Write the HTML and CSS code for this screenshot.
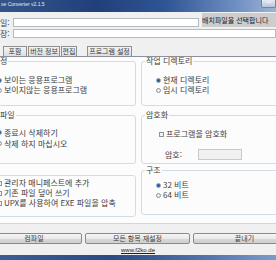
FILE: index.html
```html
<!DOCTYPE html>
<html lang="ko">
<head>
  <meta charset="UTF-8" />
  <title>Bat To Exe Converter v2.1.5</title>
  <meta name="viewport" content="width=device-width, initial-scale=1" />
  <link rel="stylesheet" href="styles.css">
</head>
<body>

  <div class="titlebar">
    <span class="title">xe Converter v2.1.5</span>
    <span class="win-btn">&minus;</span>
  </div>

  <div class="row row-file">
    <span class="label">일:</span>
    <div class="field"></div>
    <div class="pick">배치파일을 선택합니다</div>
  </div>
  <div class="row row-save">
    <span class="label">장:</span>
    <div class="field"></div>
  </div>

  <div class="tabs">
    <span class="tab tab-include">포함</span>
    <span class="tab tab-version">버전 정보</span>
    <span class="tab tab-edit">편집</span>
    <span class="tab tab-settings">프로그램 설정</span>
  </div>

  <div class="panel">
    <div class="columns">

      <div class="col col-left">
        <fieldset class="group g-window">
          <legend>정</legend>
          <div class="opts">
            <div class="opt"><span class="radio on"></span>보이는 응용프로그램</div>
            <div class="opt"><span class="radio"></span>보이지않는 응용프로그램</div>
          </div>
        </fieldset>

        <fieldset class="group g-temp">
          <legend>파일</legend>
          <div class="opts">
            <div class="opt"><span class="radio on"></span>종료시 삭제하기</div>
            <div class="opt"><span class="radio"></span>삭제 하지 마십시오</div>
          </div>
        </fieldset>

        <fieldset class="group g-misc">
          <div class="opts">
            <div class="opt"><span class="check"></span>관리자 매니페스트에 추가</div>
            <div class="opt"><span class="check"></span>기존 파일 덮어 쓰기</div>
            <div class="opt"><span class="check"></span>UPX를 사용하여 EXE 파일을 압축</div>
          </div>
        </fieldset>
      </div>

      <div class="col col-right">
        <fieldset class="group g-dir">
          <legend>작업 디렉토리</legend>
          <div class="opts">
            <div class="opt"><span class="radio on"></span>현재 디렉토리</div>
            <div class="opt"><span class="radio"></span>임시 디렉토리</div>
          </div>
        </fieldset>

        <fieldset class="group g-crypt">
          <legend>암호화</legend>
          <div class="opts">
            <div class="opt"><span class="check"></span>프로그램을 암호화</div>
            <div class="opt pass-row"><span class="pass-label">암호:</span><div class="pass-field"></div></div>
          </div>
        </fieldset>

        <fieldset class="group g-arch">
          <legend>구조</legend>
          <div class="opts">
            <div class="opt"><span class="radio on"></span>32 비트</div>
            <div class="opt"><span class="radio"></span>64 비트</div>
          </div>
        </fieldset>
      </div>

    </div>
  </div>

  <div class="buttons">
    <div class="btn">컴파일</div>
    <div class="btn">모든 항목 재설정</div>
    <div class="btn">끝내기</div>
  </div>

  <div class="footer"><a href="#">www.f2ko.de</a></div>
  <div class="frame-bottom"></div>

</body>
</html>
```

FILE: styles.css
```css
body {
  margin: 0;
  width: 276px;
  height: 260px;
  overflow: hidden;
  background: #f0f0f0;
  font-family: "Noto Sans CJK KR", sans-serif;
  font-size: 8px;
  line-height: 10px;
  color: #404040;
}

/* barra de titulo */
.titlebar {
  height: 12px;
  display: flex;
  justify-content: space-between;
  align-items: flex-start;
  background: linear-gradient(90deg, #34558c 0%, #21407a 35%, #2f5593 60%, #6d8ec2 85%, #9db4d6 100%);
}
.title {
  font-family: "Liberation Sans", sans-serif;
  font-size: 5px;
  line-height: 9px;
  color: #e4ebf6;
  padding-left: 1px;
}
.win-btn {
  width: 15px;
  height: 8px;
  box-sizing: border-box;
  border: 1px solid #6f85a6;
  border-top: 0;
  border-radius: 0 0 2px 2px;
  background: linear-gradient(#e6edf6, #b3c5dc);
  font-family: "Liberation Sans", sans-serif;
  font-size: 7px;
  line-height: 6px;
  text-align: center;
  color: #fff;
}

/* campos de archivo */
.row {
  display: flex;
  align-items: flex-end;
}
.row-file {
  margin-top: 1px;
  height: 14px;
}
.row-save {
  margin-top: 2px;
  height: 9px;
}
.label {
  width: 13px;
  line-height: 9px;
}
.field {
  flex: 1;
  height: 9px;
  box-sizing: border-box;
  border: 1px solid #b5b9c2;
  background: #fff;
}
.pick {
  width: 74px;
  height: 14px;
  margin-left: 3px;
  background: #cdcdcd;
  font-size: 7px;
  line-height: 14px;
  white-space: nowrap;
  color: #222;
}

/* pestanas */
.tabs {
  margin-top: 8px;
  height: 10px;
  display: flex;
  gap: 1px;
  padding-left: 3px;
}
.tab {
  box-sizing: border-box;
  border: 1px solid #8f8f8f;
  border-bottom: 0;
  background: linear-gradient(#f4f4f4, #dedede);
  font-size: 7px;
  line-height: 9px;
  text-align: center;
  white-space: nowrap;
}
.tab-include { width: 24px; }
.tab-version { width: 32px; }
.tab-edit { width: 16px; }
.tab-settings { width: 45px; margin-left: 9px; }

/* panel */
.panel {
  height: 168px;
  box-sizing: border-box;
  border-top: 1px solid #8d9099;
  border-bottom: 1px solid #d4d4d4;
  background: #fcfcfc;
  overflow: hidden;
}
.columns {
  display: grid;
  grid-template-columns: 161px 161px;
  column-gap: 5px;
  margin-left: -25px;
  align-items: start;
}
.group {
  margin: 0;
  padding: 0;
  min-width: 0;
  border: 1px solid #d3dce3;
  border-radius: 3px;
}
.group legend {
  margin-left: 3px;
  padding: 0 1px;
  line-height: 8px;
}
.col-left .group legend {
  margin-left: 24px;
  padding: 0 1px 0 0;
}
.opt {
  display: flex;
  align-items: center;
  gap: 2px;
  height: 10px;
  white-space: nowrap;
}
.col-left .opts { padding-left: 21px; }
.col-right .opts { padding-left: 14px; }

.radio {
  width: 5px;
  height: 5px;
  box-sizing: border-box;
  border: 1px solid #8c939c;
  border-radius: 50%;
  background: #eceef0;
}
.radio.on {
  background: radial-gradient(circle, #1e5fb0 0 1.4px, #e8ecf0 1.6px);
}
.check {
  width: 5px;
  height: 5px;
  box-sizing: border-box;
  border: 1px solid #8c939c;
  background: #f2f2f2;
}

.g-window .opts { padding-top: 10px; padding-bottom: 10px; }
.g-temp { margin-top: 5px; }
.g-temp .opts { padding-top: 8px; padding-bottom: 14px; }
.g-temp .opt { height: 11px; }
.g-misc { margin-top: 11px; }
.g-misc .opts { padding-top: 2px; padding-bottom: 8px; }

.g-dir .opts { padding-top: 10px; padding-bottom: 10px; }
.g-crypt { margin-top: 5px; }
.g-crypt .opts { padding-top: 10px; padding-bottom: 3px; padding-left: 17px; }
.pass-row {
  margin-top: 10px;
  height: 11px;
  padding-left: 6px;
}
.pass-label { width: 31px; }
.pass-field {
  width: 44px;
  height: 11px;
  box-sizing: border-box;
  border: 1px solid #c9c9c9;
  background: #f1f1f1;
}
.g-arch { margin-top: 2px; }
.g-arch .opts { padding-top: 6px; padding-bottom: 14px; }

/* botones */
.buttons {
  margin-top: 9px;
  margin-left: -14px;
  display: grid;
  grid-template-columns: 96px 105px 103px;
  column-gap: 3px;
}
.btn {
  height: 11px;
  box-sizing: border-box;
  border: 1px solid #8a8a8a;
  border-radius: 2px;
  background: linear-gradient(#f5f5f5 0%, #e9e9e9 50%, #d9d9d9 51%, #cfcfcf 100%);
  font-size: 7px;
  line-height: 9px;
  text-align: center;
  white-space: nowrap;
}

.footer {
  margin-top: 2px;
  height: 9px;
  text-align: center;
  font-family: "Liberation Sans", sans-serif;
  font-size: 6px;
  line-height: 9px;
}
.footer a {
  color: #202020;
}
.frame-bottom {
  height: 5px;
  background: linear-gradient(90deg, #3a5d95, #2a4c86 40%, #4f74ae 75%, #7d9bc9);
}
```
